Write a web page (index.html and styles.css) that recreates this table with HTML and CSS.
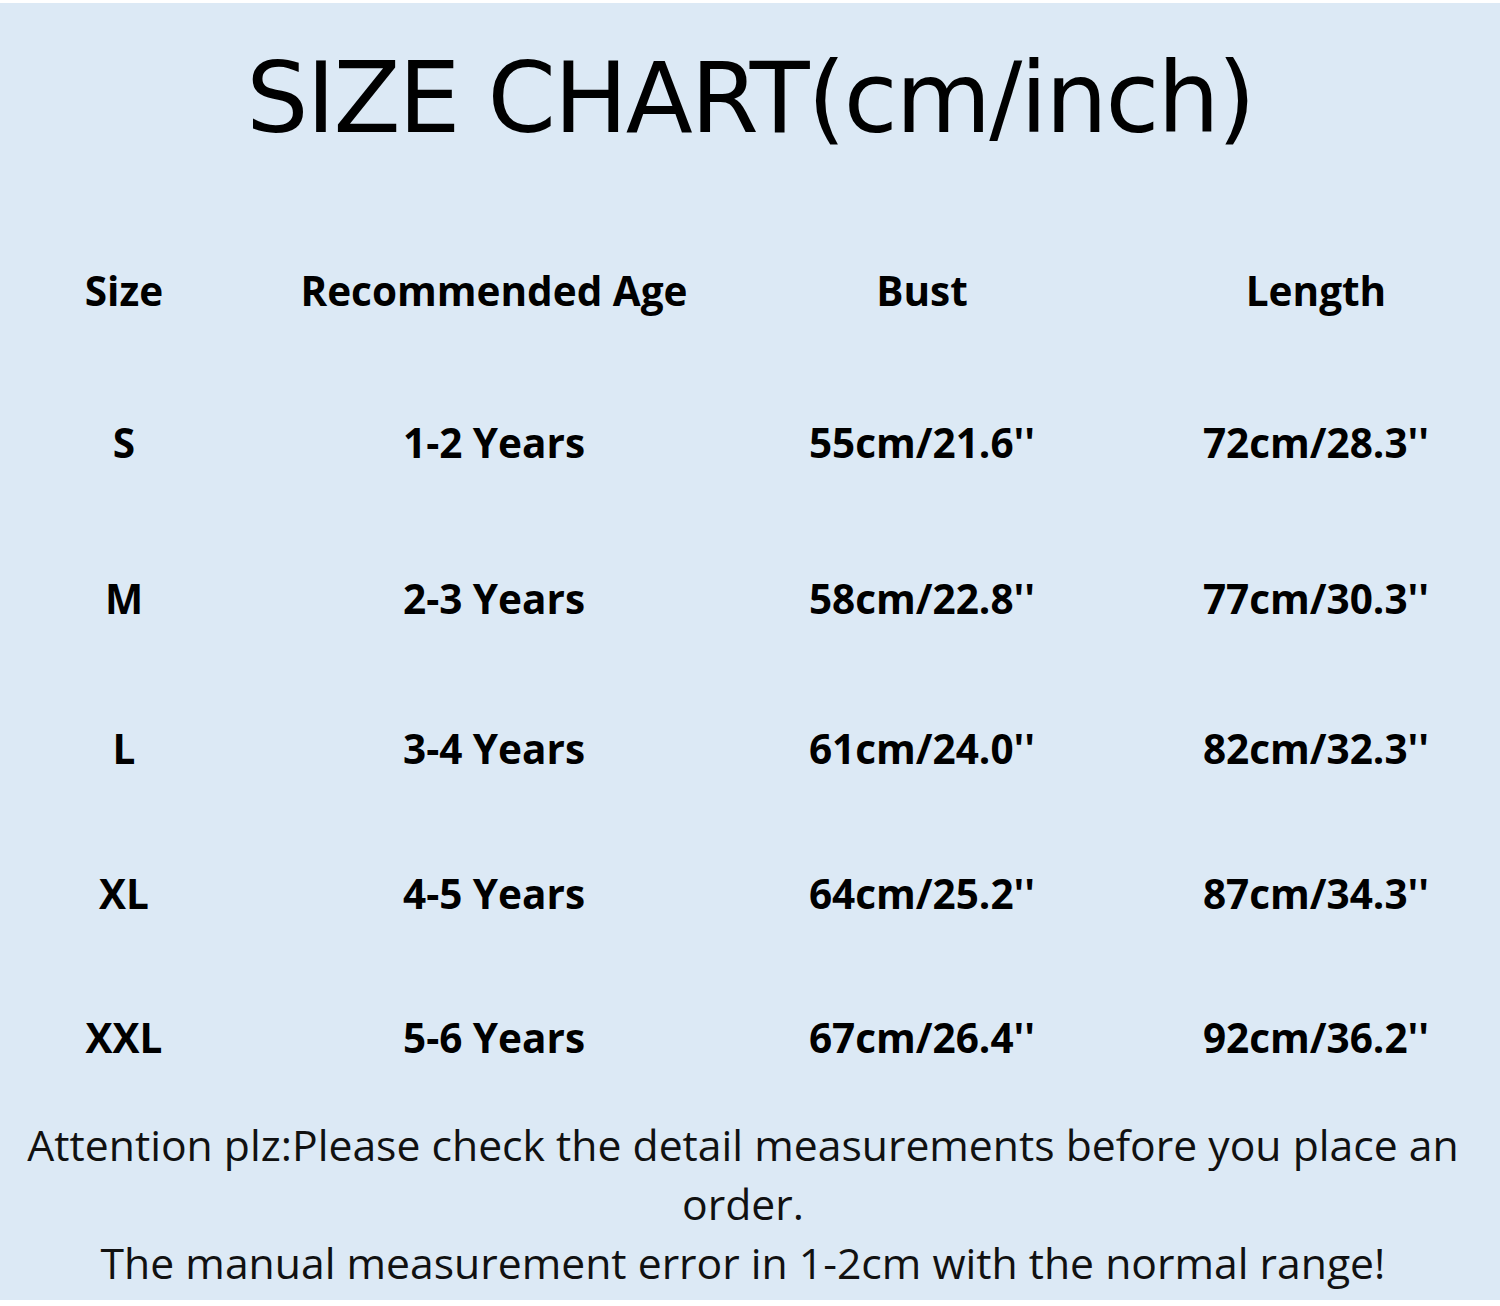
FILE: index.html
```html
<!DOCTYPE html>
<html>
<head>
<meta charset="utf-8">
<link rel="stylesheet" href="styles.css">
</head>
<body>
<div class="page">
  <h1 class="title">SIZE CHART(cm/inch)</h1>
  <div class="chart">
    <div class="cell head">Size</div><div class="cell head">Recommended Age</div><div class="cell head">Bust</div><div class="cell head last">Length</div>
    <div class="cell">S</div><div class="cell">1-2 Years</div><div class="cell">55cm/21.6''</div><div class="cell last">72cm/28.3''</div>
    <div class="cell">M</div><div class="cell">2-3 Years</div><div class="cell">58cm/22.8''</div><div class="cell last">77cm/30.3''</div>
    <div class="cell">L</div><div class="cell">3-4 Years</div><div class="cell">61cm/24.0''</div><div class="cell last">82cm/32.3''</div>
    <div class="cell">XL</div><div class="cell">4-5 Years</div><div class="cell">64cm/25.2''</div><div class="cell last">87cm/34.3''</div>
    <div class="cell">XXL</div><div class="cell">5-6 Years</div><div class="cell">67cm/26.4''</div><div class="cell last">92cm/36.2''</div>
  </div>
  <p class="note">Attention plz:Please check the detail measurements before you place an<br>order.<br>The manual measurement error in 1-2cm with the normal range!</p>
</div>
</body>
</html>
```
FILE: styles.css
```css
html, body {
  margin: 0;
  padding: 0;
  background: #ffffff;
}
.page {
  width: 1500px;
  height: 1297px;
  margin-top: 3px;
  background: #dce9f5;
  overflow: hidden;
  display: flex;
  flex-direction: column;
}
.title {
  margin: 0;
  height: 212px;
  display: flex;
  align-items: center;
  justify-content: center;
  padding-bottom: 22px;
  box-sizing: border-box;
  font-family: "DejaVu Sans", sans-serif;
  font-weight: normal;
  font-size: 98px;
  letter-spacing: -2px;
  color: #000;
}
.chart {
  display: grid;
  grid-template-columns: 248px 492px 364px 1fr;
  grid-template-rows: 150px 154px 158px 142px 148px 140px;
  font-family: "Open Sans", sans-serif;
  font-weight: bold;
  font-size: 40.5px;
  color: #000;
}
.cell {
  display: flex;
  align-items: center;
  justify-content: center;
}
.cell.last {
  padding-left: 28px;
}
.note {
  margin: 0;
  padding-top: 8px;
  padding-right: 14px;
  text-align: center;
  font-family: "Open Sans", sans-serif;
  font-size: 42.7px;
  line-height: 59px;
  color: #111;
}
```
